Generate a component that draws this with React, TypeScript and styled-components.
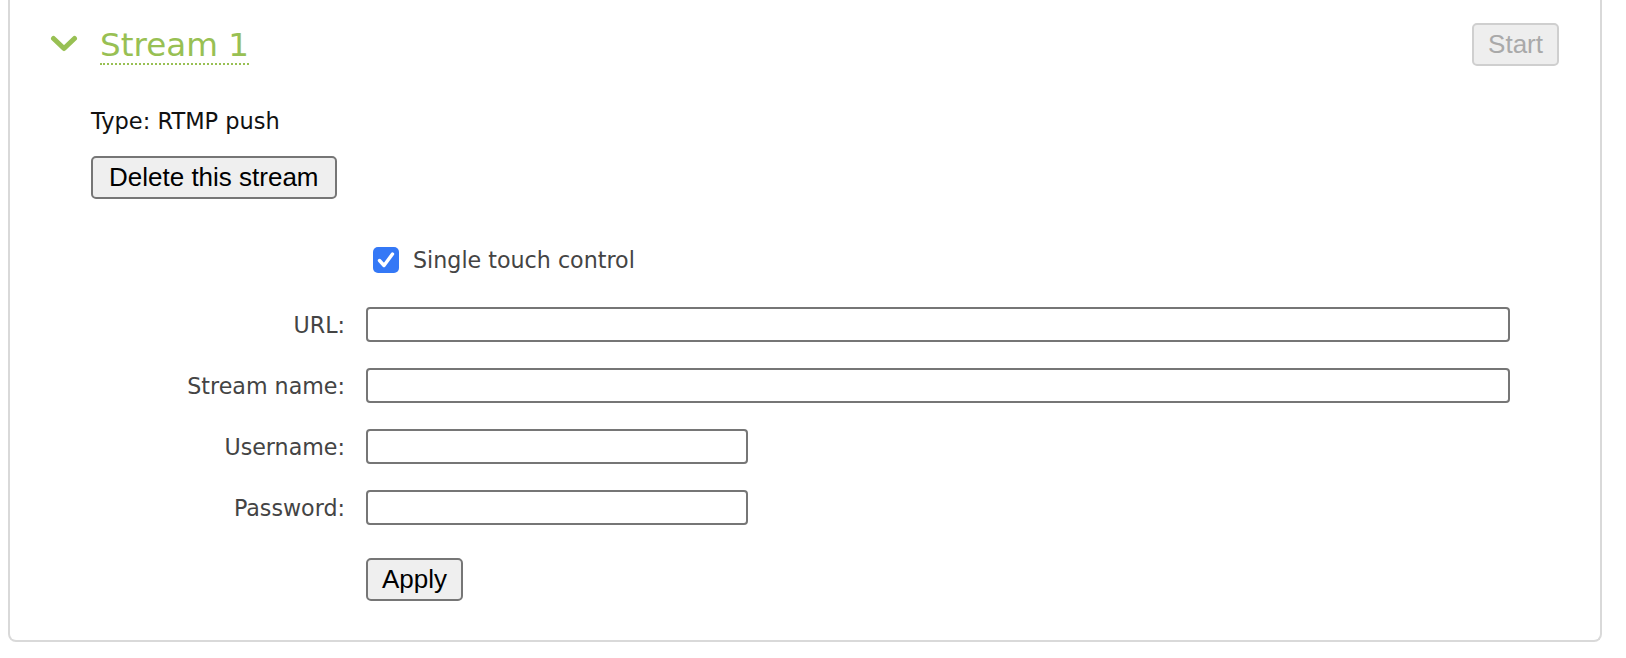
import React, { useState } from 'react';
import styled, { createGlobalStyle } from 'styled-components';

const GlobalStyle = createGlobalStyle`
    body {
        margin: 0 8px;
        background: #fff;
        font-family: 'DejaVu Sans', Verdana, sans-serif;
    }
`;

const App: React.FC = () => {
    const [singleTouch, setSingleTouch] = useState(true);

    return (
        <>
            <GlobalStyle />
            <Card>
                <Header>
                    <Chevron viewBox="0 0 28 18">
                        <polyline points="3.5,3.5 14,13.5 24.5,3.5" />
                    </Chevron>
                    <Title>Stream 1</Title>
                    <Spacer />
                    <Button disabled>Start</Button>
                </Header>
                <Body>
                    <TypeLine>Type: RTMP push</TypeLine>
                    <Button $pad={16}>Delete this stream</Button>
                    <Form>
                        <span />
                        <CheckRow onClick={() => setSingleTouch(!singleTouch)}>
                            <CheckBox checked={singleTouch}>
                                {singleTouch && (
                                    <svg viewBox="0 0 26 26" width="26" height="26">
                                        <polyline points="6.5,13.5 11,18.5 19.5,7" />
                                    </svg>
                                )}
                            </CheckBox>
                            Single touch control
                        </CheckRow>

                        <Label>URL:</Label>
                        <Input $wide />
                        <Label>Stream name:</Label>
                        <Input $wide />
                        <Label>Username:</Label>
                        <Input />
                        <Label>Password:</Label>
                        <Input type="password" />

                        <span />
                        <div>
                            <ApplyButton>Apply</ApplyButton>
                        </div>
                    </Form>
                </Body>
            </Card>
        </>
    );
};

const Card = styled.div`
    width: 1594px;
    box-sizing: border-box;
    border: 2px solid #d9d9d9;
    border-top: none;
    border-radius: 0 0 8px 8px;
    padding-bottom: 39px;
`;

const Header = styled.div`
    display: flex;
    align-items: center;
    height: 42px;
    padding: 23px 41px 0 40px;
`;

const Chevron = styled.svg`
    width: 28px;
    height: 18px;
    margin-right: 22px;
    fill: none;
    stroke: #98c053;
    stroke-width: 5;
    stroke-linecap: round;
    stroke-linejoin: round;
`;

const Title = styled.span`
    font-size: 32.6px;
    line-height: 36px;
    color: #98c053;
    border-bottom: 2px dotted #98c053;
    margin-top: 4px;
`;

const Spacer = styled.div`
    flex: 1;
`;

const Button = styled.button<{ $pad?: number }>`
    font-family: 'Liberation Sans', Arial, sans-serif;
    font-size: 26px;
    line-height: 31px;
    color: #000;
    background: #efefef;
    border: 2px solid #767676;
    border-radius: 5px;
    padding: 4px ${(p) => p.$pad ?? 14}px 4px;
    margin: 0;

    &:disabled {
        color: #a9a9a9;
        border-color: #cfcfcf;
        background: #eeeeee;
    }
`;

const Body = styled.div`
    padding-left: 81px;
`;

const TypeLine = styled.div`
    font-size: 22.5px;
    line-height: 26px;
    color: #111;
    margin: 43px 0 22px;
`;

const Form = styled.div`
    display: grid;
    grid-template-columns: 254px auto;
    column-gap: 21px;
    row-gap: 26px;
    align-items: center;
    margin-top: 45px;
    margin-left: -81px;
    padding-left: 81px;
`;

const CheckRow = styled.label`
    display: flex;
    align-items: center;
    gap: 14px;
    padding-left: 7px;
    margin: 3px 0 8px;
    font-size: 22.2px;
    color: #444;
    cursor: pointer;
`;

const CheckBox = styled.span<{ checked: boolean }>`
    display: inline-block;
    width: 26px;
    height: 26px;
    box-sizing: border-box;
    border-radius: 5px;
    background: ${(p) => (p.checked ? '#3478f6' : '#fff')};
    border: ${(p) => (p.checked ? 'none' : '2px solid #767676')};

    svg {
        display: block;
        fill: none;
        stroke: #fff;
        stroke-width: 3.4;
        stroke-linecap: round;
        stroke-linejoin: round;
    }
`;

const Label = styled.label`
    text-align: right;
    font-size: 22.2px;
    color: #444;
`;

const Input = styled.input<{ $wide?: boolean }>`
    width: ${(p) => (p.$wide ? '1144px' : '382px')};
    height: 35px;
    box-sizing: border-box;
    border: 2px solid #767676;
    border-radius: 4px;
    padding: 2px 6px;
    font-size: 18px;
    background: #fff;
    outline: none;
`;

const ApplyButton = styled(Button)`
    margin-top: 7px;
`;

export default App;
